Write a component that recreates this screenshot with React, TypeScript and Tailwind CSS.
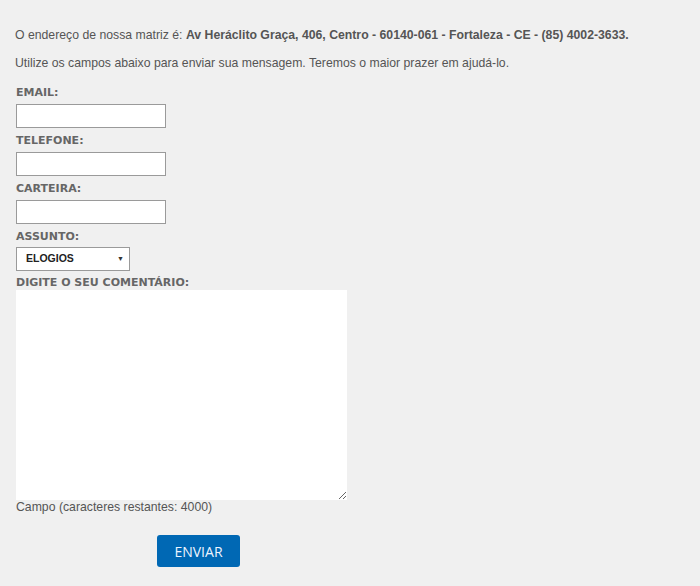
import { useState } from "react";

const labelClass =
  "block h-[14px] text-[11px] leading-[14px] font-bold text-[#666] font-['DejaVu_Sans',Verdana,sans-serif]";
const inputClass =
  "block w-[150px] h-[24px] bg-white border border-[#9a9a9a] px-1 text-[13px] outline-none";

export default function App() {
  const [comment, setComment] = useState("");
  const remaining = 4000 - comment.length;

  return (
    <div className="min-h-[586px] w-[700px] bg-[#f0f0f0] text-[#555] font-['Liberation_Sans',Arial,sans-serif]">
      <div className="pl-[15px] pt-[27px] pb-[19px]">
        <p className="text-[12.25px] leading-[16px] mb-[12px]">
          O endereço de nossa matriz é:{" "}
          <b>Av Heráclito Graça, 406, Centro - 60140-061 - Fortaleza - CE - (85) 4002-3633.</b>
        </p>
        <p className="text-[12.25px] leading-[16px] mb-[15px]">
          Utilize os campos abaixo para enviar sua mensagem. Teremos o maior prazer em ajudá-lo.
        </p>

        <form className="pl-px" onSubmit={(e) => e.preventDefault()}>
          <label className={labelClass}>EMAIL:</label>
          <input type="text" className={`${inputClass} mt-[4px] mb-[6px]`} />

          <label className={labelClass}>TELEFONE:</label>
          <input type="text" className={`${inputClass} mt-[4px] mb-[6px]`} />

          <label className={labelClass}>CARTEIRA:</label>
          <input type="text" className={`${inputClass} mt-[4px] mb-[6px]`} />

          <label className={labelClass}>ASSUNTO:</label>
          <div className="relative mt-[3px] mb-[5px] w-[114px] h-[24px]">
            <select className="appearance-none block w-full h-full bg-white border border-[#9a9a9a] pl-[9px] text-[10.5px] font-bold text-[#222] outline-none">
              <option>ELOGIOS</option>
              <option>SUGESTÕES</option>
              <option>RECLAMAÇÕES</option>
            </select>
            <span className="pointer-events-none absolute right-[6px] top-[5px] text-[7px] leading-[14px] text-[#333]">
              ▼
            </span>
          </div>

          <label className={labelClass}>DIGITE O SEU COMENTÁRIO:</label>
          <textarea
            value={comment}
            onChange={(e) => setComment(e.target.value.slice(0, 4000))}
            className="block w-[331px] h-[210px] bg-white border-0 outline-none p-1 text-[13px]"
          />
          <p className="text-[12.25px] leading-[16px] -mt-px">
            Campo (caracteres restantes: {remaining})
          </p>

          <div className="mt-[20px] pl-[141px]">
            <button
              type="submit"
              className="w-[83px] h-[32px] rounded-[3px] bg-[#0068b4] text-[#eef4ff] text-[14px] font-['Open_Sans',sans-serif]"
            >
              ENVIAR
            </button>
          </div>
        </form>
      </div>
    </div>
  );
}
